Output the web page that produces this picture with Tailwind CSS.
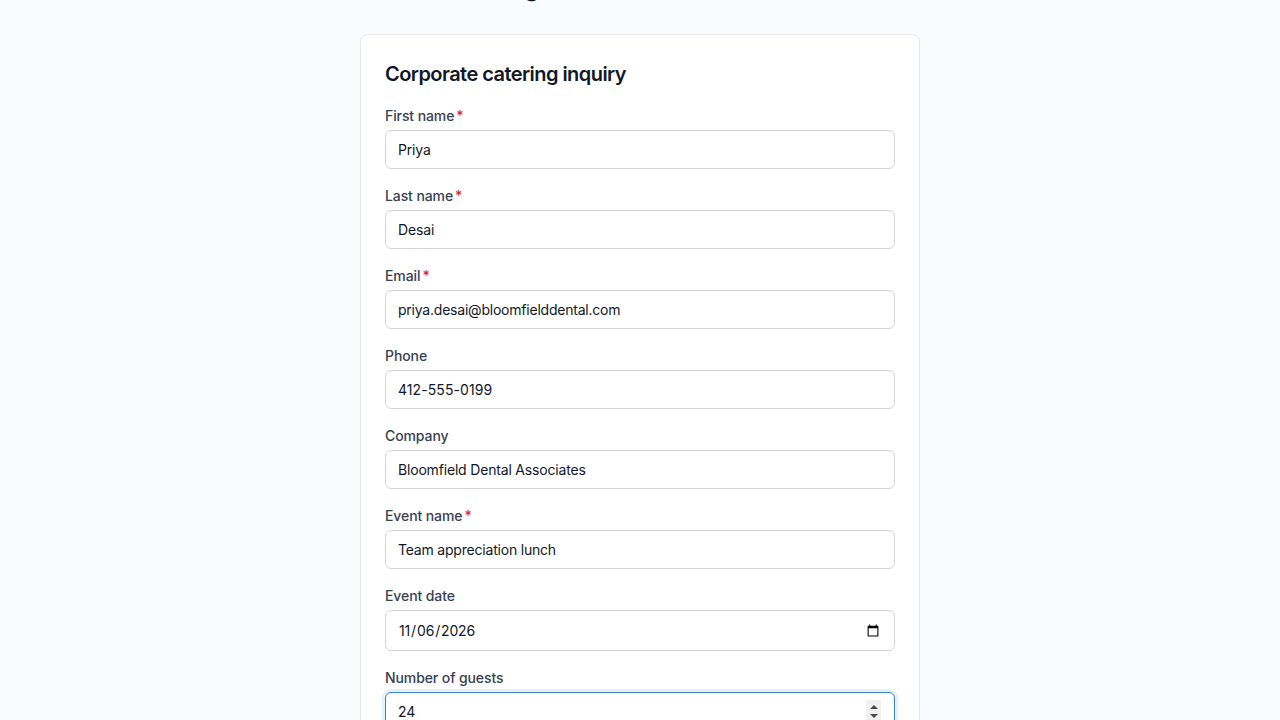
<!DOCTYPE html>
<html lang="en">
<head>
  <meta charset="UTF-8">
  <meta name="viewport" content="width=device-width, initial-scale=1">
  <title>Corporate catering inquiry</title>
  <script src="https://cdn.jsdelivr.net/npm/@tailwindcss/browser@4"></script>
</head>
<body class="h-screen overflow-hidden bg-[#fafbfd] font-['Inter',sans-serif] text-gray-900">
  <main class="w-[560px] mx-auto -mt-[28px]">
    <h1 class="h-[32px] mb-[30px] text-center text-2xl font-semibold">Sage Street Kitchen Cafe</h1>

    <form class="bg-white border border-gray-200 rounded-lg px-6 pt-[25px] pb-6">
      <h2 class="text-xl leading-7 font-semibold tracking-[-0.55px] text-gray-900 mb-[18px]">Corporate catering inquiry</h2>

      <div class="mb-[17px]">
        <label class="block text-sm leading-5 font-medium tracking-[-0.1px] text-gray-700 mb-1">First name<span class="text-[#dc2626] ml-0.5">*</span></label>
        <input type="text" value="Priya" class="block w-full h-[39px] px-3 border border-[#d4d4d8] rounded-md bg-white text-sm tracking-[-0.16px] text-gray-900">
      </div>
      <div class="mb-[17px]">
        <label class="block text-sm leading-5 font-medium tracking-[-0.1px] text-gray-700 mb-1">Last name<span class="text-[#dc2626] ml-0.5">*</span></label>
        <input type="text" value="Desai" class="block w-full h-[39px] px-3 border border-[#d4d4d8] rounded-md bg-white text-sm tracking-[-0.16px] text-gray-900">
      </div>
      <div class="mb-[17px]">
        <label class="block text-sm leading-5 font-medium tracking-[-0.1px] text-gray-700 mb-1">Email<span class="text-[#dc2626] ml-0.5">*</span></label>
        <input type="email" value="priya.desai@bloomfielddental.com" class="block w-full h-[39px] px-3 border border-[#d4d4d8] rounded-md bg-white text-sm tracking-[-0.22px] text-gray-900">
      </div>
      <div class="mb-[17px]">
        <label class="block text-sm leading-5 font-medium tracking-[-0.1px] text-gray-700 mb-1">Phone</label>
        <input type="tel" value="412-555-0199" class="block w-full h-[39px] px-3 border border-[#d4d4d8] rounded-md bg-white text-sm tracking-[0.08px] text-gray-900">
      </div>
      <div class="mb-[17px]">
        <label class="block text-sm leading-5 font-medium tracking-[-0.1px] text-gray-700 mb-1">Company</label>
        <input type="text" value="Bloomfield Dental Associates" class="block w-full h-[39px] px-3 border border-[#d4d4d8] rounded-md bg-white text-sm tracking-[-0.18px] text-gray-900">
      </div>
      <div class="mb-[17px]">
        <label class="block text-sm leading-5 font-medium tracking-[-0.1px] text-gray-700 mb-1">Event name<span class="text-[#dc2626] ml-0.5">*</span></label>
        <input type="text" value="Team appreciation lunch" class="block w-full h-[39px] px-3 border border-[#d4d4d8] rounded-md bg-white text-sm tracking-[-0.2px] text-gray-900">
      </div>
      <div class="mb-[17px]">
        <label class="block text-sm leading-5 font-medium tracking-[-0.1px] text-gray-700 mb-1">Event date</label>
        <input type="date" value="2026-11-06" class="block w-full h-[41px] px-3 border border-[#d4d4d8] rounded-md bg-white text-sm tracking-[-0.16px] text-gray-900">
      </div>
      <div class="mb-[17px]">
        <label class="block text-sm leading-5 font-medium tracking-[-0.1px] text-gray-700 mb-1">Number of guests</label>
        <div class="relative">
          <input type="number" value="24" class="block w-full h-[39px] px-3 border border-[#3b82c4] rounded-md bg-white text-sm text-gray-900 ring-3 ring-sky-100 [&::-webkit-inner-spin-button]:appearance-none">
          <!-- spinner as it looks while the field has focus -->
          <span class="absolute top-2 right-[14px] w-[15px] h-[23px] bg-[#f0f0f0] flex flex-col items-center gap-[5px] pt-[5px]">
            <svg width="8" height="4" viewBox="0 0 8 4" class="block"><path d="M4 0 8 4H0z" fill="#4b4b4b"/></svg>
            <svg width="8" height="4" viewBox="0 0 8 4" class="block"><path d="M0 0h8L4 4z" fill="#4b4b4b"/></svg>
          </span>
        </div>
      </div>
    </form>
  </main>
</body>
</html>
